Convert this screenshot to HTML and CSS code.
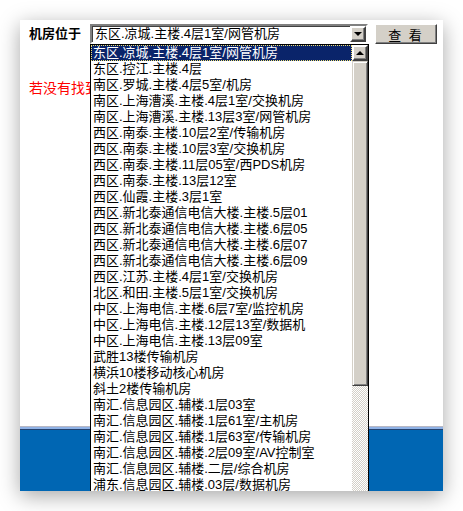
FILE: index.html
```html
<!DOCTYPE html>
<html lang="zh-CN">
<head>
  <meta charset="UTF-8">
  <title>机房查询</title>
  <link rel="stylesheet" href="styles.css">
</head>
<body>
  <div class="window">
    <div class="top">
      <span class="label">机房位于</span>
      <div class="select">
        <span class="select-text">东区.凉城.主楼.4层1室/网管机房</span>
        <span class="arrow-btn"><span class="tri down"></span></span>
      </div>
      <button class="button-text">查 看</button>
    </div>

    <p class="notice">若没有找到您所在的机房，请与管理员联系</p>

    <div class="footer"></div>

    <div class="droplist">
      <ul class="options">
        <li class="selected">东区.凉城.主楼.4层1室/网管机房</li>
        <li>东区.控江.主楼.4层</li>
        <li>南区.罗城.主楼.4层5室/机房</li>
        <li>南区.上海漕溪.主楼.4层1室/交换机房</li>
        <li>南区.上海漕溪.主楼.13层3室/网管机房</li>
        <li>西区.南泰.主楼.10层2室/传输机房</li>
        <li>西区.南泰.主楼.10层3室/交换机房</li>
        <li>西区.南泰.主楼.11层05室/西PDS机房</li>
        <li>西区.南泰.主楼.13层12室</li>
        <li>西区.仙霞.主楼.3层1室</li>
        <li>西区.新北泰通信电信大楼.主楼.5层01</li>
        <li>西区.新北泰通信电信大楼.主楼.6层05</li>
        <li>西区.新北泰通信电信大楼.主楼.6层07</li>
        <li>西区.新北泰通信电信大楼.主楼.6层09</li>
        <li>西区.江苏.主楼.4层1室/交换机房</li>
        <li>北区.和田.主楼.5层1室/交换机房</li>
        <li>中区.上海电信.主楼.6层7室/监控机房</li>
        <li>中区.上海电信.主楼.12层13室/数据机</li>
        <li>中区.上海电信.主楼.13层09室</li>
        <li>武胜13楼传输机房</li>
        <li>横浜10楼移动核心机房</li>
        <li>斜土2楼传输机房</li>
        <li>南汇.信息园区.辅楼.1层03室</li>
        <li>南汇.信息园区.辅楼.1层61室/主机房</li>
        <li>南汇.信息园区.辅楼.1层63室/传输机房</li>
        <li>南汇.信息园区.辅楼.2层09室/AV控制室</li>
        <li>南汇.信息园区.辅楼.二层/综合机房</li>
        <li>浦东.信息园区.辅楼.03层/数据机房</li>
      </ul>
      <div class="scrollbar">
        <span class="arrow-btn up-btn"><span class="tri up"></span></span>
        <div class="thumb"></div>
        <div class="track"></div>
      </div>
    </div>
  </div>
</body>
</html>
```

FILE: styles.css
```css
body {
  margin: 0;
  padding: 20px;
  background: #ffffff;
  font-family: "Liberation Sans", "Noto Sans CJK SC", sans-serif;
  font-size: 13px;
  color: #000;
}

.window {
  position: relative;
  width: 423px;
  height: 471px;
  background: #ffffff;
  overflow: hidden;
  display: flex;
  flex-direction: column;
  box-shadow: 0 5px 20px rgba(0, 0, 0, 0.35);
}

.top {
  display: flex;
  align-items: center;
  padding: 4px 0 0 9px;
  height: 20px;
}

.label {
  font-weight: bold;
  font-size: 13px;
  width: 61px;
  line-height: 20px;
}

.select {
  width: 274px;
  height: 16px;
  border: 2px solid;
  border-color: #808080 #ffffff #ffffff #808080;
  box-shadow: inset 1px 1px 0 #404040;
  display: flex;
  align-items: center;
  justify-content: space-between;
  background: #fff;
}

.select-text {
  padding-left: 3px;
  line-height: 16px;
}

.arrow-btn {
  width: 12px;
  height: 12px;
  background: #d4d0c8;
  border: 2px solid;
  border-color: #ffffff #404040 #404040 #ffffff;
  box-shadow: inset -1px -1px 0 #808080;
  display: flex;
  align-items: center;
  justify-content: center;
}

.tri {
  width: 0;
  height: 0;
  border-left: 4px solid transparent;
  border-right: 4px solid transparent;
}

.tri.down {
  border-top: 4px solid #000;
}

.tri.up {
  border-bottom: 4px solid #000;
}

.button-text {
  margin-left: 7px;
  width: 62px;
  height: 20px;
  padding: 0;
  font-family: inherit;
  font-size: 13px;
  letter-spacing: 2px;
  background: #d4d0c8;
  border: 1px solid;
  border-color: #ffffff #404040 #404040 #ffffff;
  box-shadow: inset -1px -1px 0 #808080;
}

.notice {
  margin: 36px 0 0 9px;
  color: #ff0000;
  font-size: 14px;
  line-height: 16px;
}

.footer {
  margin-top: auto;
  height: 64px;
  background: #0066b3;
  border-top: 1px solid #b8b8c4;
  box-shadow: inset 0 2px 0 #8fb2e6, inset 0 3px 0 #23416e;
}

.droplist {
  position: absolute;
  left: 70px;
  top: 24px;
  width: 277px;
  height: 460px;
  border: 1px solid #000;
  background: #fff;
  display: flex;
}

.options {
  list-style: none;
  margin: 0;
  padding: 0;
  flex: 1;
}

.options li {
  height: 16px;
  line-height: 16px;
  padding-left: 2px;
  white-space: nowrap;
  overflow: hidden;
}

.options li.selected {
  background: #0a246a;
  color: #fff;
  outline: 1px dotted #f0e070;
  outline-offset: -1px;
}

.scrollbar {
  width: 16px;
  display: flex;
  flex-direction: column;
}

.up-btn {
  flex: none;
}

.thumb {
  height: 323px;
  background: #d4d0c8;
  border: 1px solid;
  border-color: #d4d0c8 #404040 #404040 #d4d0c8;
  box-shadow: inset 1px 1px 0 #ffffff, inset -1px -1px 0 #808080;
}

.track {
  flex: 1;
  background-color: #ffffff;
  background-image: conic-gradient(#d4d0c8 25%, transparent 0 50%, #d4d0c8 0 75%, transparent 0);
  background-size: 2px 2px;
}
```
